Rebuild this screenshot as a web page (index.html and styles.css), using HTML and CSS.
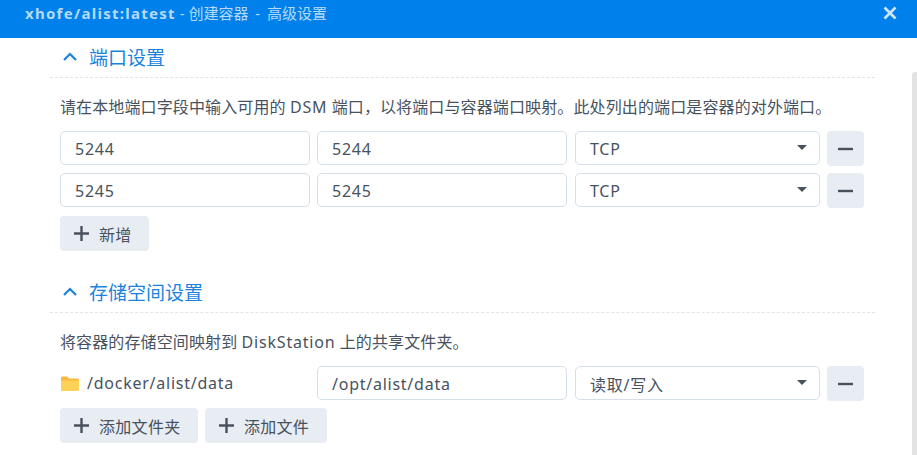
FILE: index.html
```html
<!DOCTYPE html>
<html lang="zh">
<head>
<meta charset="utf-8">
<title>创建容器 - 高级设置</title>
<link rel="stylesheet" href="styles.css">
</head>
<body>
<header class="titlebar">
  <span class="title"><span class="title-id">xhofe/alist:latest</span> - 创建容器<span class="sep"> - </span>高级设置</span>
  <svg class="close" viewBox="0 0 14 14" width="14" height="14"><path d="M1.5 1.5l11 11M12.5 1.5l-11 11"/></svg>
</header>
<main class="content">
  <section class="section">
    <div class="section-head">
      <svg class="chev" viewBox="0 0 16 10" width="16" height="10"><path d="M2 8l6-6 6 6"/></svg>
      <h2>端口设置</h2>
    </div>
    <p class="desc">请在本地端口字段中输入可用的 <span class="latin">DSM</span> 端口，以将端口与容器端口映射。此处列出的端口是容器的对外端口。</p>
    <div class="row">
      <div class="field">5244</div>
      <div class="field">5244</div>
      <div class="select">TCP<i class="caret"></i></div>
      <button class="btn icon-btn"><svg viewBox="0 0 15 4" width="15" height="4"><path d="M0 2h15"/></svg></button>
    </div>
    <div class="row">
      <div class="field">5245</div>
      <div class="field">5245</div>
      <div class="select">TCP<i class="caret"></i></div>
      <button class="btn icon-btn"><svg viewBox="0 0 15 4" width="15" height="4"><path d="M0 2h15"/></svg></button>
    </div>
    <div class="actions">
      <button class="btn"><svg viewBox="0 0 15 15" width="15" height="15"><path d="M7.500 0v15M0 7.500h15"/></svg>新增</button>
    </div>
  </section>
  <section class="section second">
    <div class="section-head">
      <svg class="chev" viewBox="0 0 16 10" width="16" height="10"><path d="M2 8l6-6 6 6"/></svg>
      <h2>存储空间设置</h2>
    </div>
    <p class="desc">将容器的存储空间映射到 <span class="latin">DiskStation</span> 上的共享文件夹。</p>
    <div class="row">
      <div class="path">
        <svg class="folder" viewBox="0 0 18 15" width="18" height="15"><path class="f-back" d="M0 2a1.500 1.500 0 0 1 1.500-1.500h4.500l2 2h8.500a1.500 1.500 0 0 1 1.500 1.500v1h-18z"/><path class="f-front" d="M0 4.500h18v9a1.500 1.500 0 0 1-1.500 1.500h-15a1.500 1.500 0 0 1-1.500-1.500z"/></svg>
        <span>/docker/alist/data</span>
      </div>
      <div class="field">/opt/alist/data</div>
      <div class="select">读取/写入<i class="caret"></i></div>
      <button class="btn icon-btn"><svg viewBox="0 0 15 4" width="15" height="4"><path d="M0 2h15"/></svg></button>
    </div>
    <div class="actions tight">
      <button class="btn"><svg viewBox="0 0 15 15" width="15" height="15"><path d="M7.500 0v15M0 7.500h15"/></svg>添加文件夹</button>
      <button class="btn"><svg viewBox="0 0 15 15" width="15" height="15"><path d="M7.500 0v15M0 7.500h15"/></svg>添加文件</button>
    </div>
  </section>
</main>
<div class="scroll-thumb"></div>
</body>
</html>
```
FILE: styles.css
```css
* { box-sizing: border-box; }
html, body { margin: 0; height: 455px; overflow: hidden; background: #fff; }
body {
  font-family: "Noto Sans", "Noto Sans CJK SC", sans-serif;
  font-size: 16px;
  color: #47525e;
}
.titlebar {
  height: 38px;
  background: #0080ea;
  display: flex;
  align-items: center;
  justify-content: space-between;
  padding: 0 20px 12px 25px;
  color: #b5daf8;
}
.title { font-size: 15px; font-weight: 400; line-height: 26px; }
.title-id { font-weight: 700; letter-spacing: 1.27px; }
.sep { word-spacing: 3px; }
.close { fill: none; stroke: #cfe6fa; stroke-width: 2.6; }
.content { padding: 0 42px 0 50px; }
.section-head {
  height: 40px;
  display: flex;
  align-items: center;
  gap: 11px;
  padding: 0 0 2px 12px;
  border-bottom: 1px dashed #dfe5ea;
}
.section-head h2 { margin: 0; font-size: 19px; font-weight: 400; color: #1a83e0; }
.chev { fill: none; stroke: #1a83e0; stroke-width: 2.200; }
.desc { margin: 0; padding: 18px 0 0 10px; height: 53px; line-height: 22px; font-size: 16px; letter-spacing: .12px; white-space: nowrap; }
.latin { letter-spacing: .8px; }
.row { display: flex; gap: 7px; padding-left: 10px; height: 35px; margin-bottom: 7px; }
.row .select { margin-left: 1px; }
.field, .select {
  height: 34px;
  border: 1px solid #d6dfe8;
  border-radius: 5px;
  display: flex;
  align-items: center;
  background: #fff;
  font-size: 16px;
  padding-top: 1px;
  letter-spacing: .75px;
}
.field { width: 250px; padding-left: 14px; }
.select { width: 245px; padding: 1px 12px 0 14px; justify-content: space-between; }
.caret {
  width: 0; height: 0;
  margin-top: -2px;
  border-left: 5px solid transparent;
  border-right: 5px solid transparent;
  border-top: 5px solid #47525e;
}
.btn {
  height: 35px;
  border: 0;
  border-radius: 4px;
  background: #e8ecf3;
  color: #47525e;
  font: inherit;
  font-size: 16px;
  letter-spacing: .3px;
  display: inline-flex;
  align-items: center;
  gap: 10px;
  padding: 0 17.4px 0 14px;
}
.btn svg { fill: none; stroke: #47525e; stroke-width: 2.4; }
.icon-btn { width: 37px; padding: 0; justify-content: center; }
.actions { display: flex; gap: 7px; padding-left: 10px; margin-top: 8px; height: 35px; }
.actions.tight { margin-top: 0; }
.second { margin-top: 22px; }
.path { width: 250px; display: flex; align-items: center; gap: 8px; padding-left: 1px; font-size: 16px; height: 34px; letter-spacing: .75px; }
.folder .f-back { fill: #f5b93c; }
.folder .f-front { fill: #ffd257; }
.scroll-thumb {
  position: absolute;
  left: 912px; top: 72px;
  width: 5px; height: 383px;
  background: #e3e3e3;
  border-radius: 3px 0 0 0;
}
```
